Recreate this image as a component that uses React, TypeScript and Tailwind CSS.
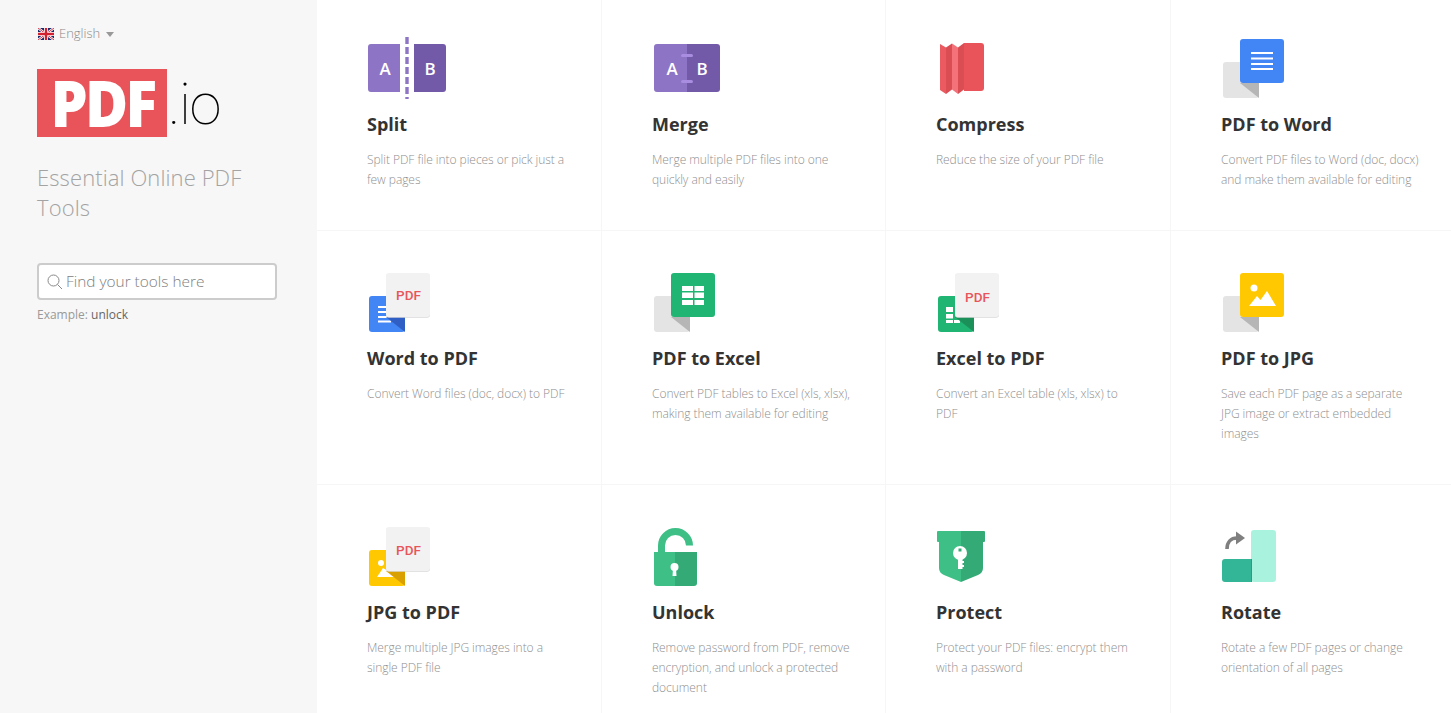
import type { ReactNode } from "react";

const fold = (bg: string, fg: string, shade: string) => (
  <>
    <rect x="2" y="25" width="36" height="36" rx="3" fill={bg} />
    <path d="M19 46H38V61Z" fill={shade} />
    <rect x="19" y="2" width="44" height="44" rx="3" fill={fg} />
  </>
);

const pdfSheet = (y: number) => (
  <>
    <rect x="19" y="2.800" width="44" height="44" rx="3" fill="#d9d9d9" />
    <rect x="19" y="2" width="44" height="44" rx="3" fill="#f2f2f2" />
    <text x="41.500" y={y} textAnchor="middle" fontSize="13.500" fontWeight="500" fill="#e8565c" fontFamily="Roboto, sans-serif">PDF</text>
  </>
);

const letter = (x: number, ch: string) => (
  <text x={x} y="38" textAnchor="middle" fontSize="17" fontWeight="600" fill="#fff" fontFamily="'Open Sans', sans-serif">{ch}</text>
);

const icons: Record<string, ReactNode> = {
  split: (
    <>
      <path d="M4 7H33V55H4A3 3 0 0 1 1 52V10A3 3 0 0 1 4 7Z" fill="#8d74c5" />
      <path d="M47 7H76A3 3 0 0 1 79 10V52A3 3 0 0 1 76 55H47Z" fill="#735aa9" />
      <path d="M40 0V62" stroke="#8d74c5" strokeWidth="3.400" strokeDasharray="7 3" />
      {letter(18, "A")}
      {letter(63, "B")}
    </>
  ),
  merge: (
    <>
      <path d="M5 7H35V55H5A3 3 0 0 1 2 52V10A3 3 0 0 1 5 7Z" fill="#8d74c5" />
      <path d="M35 7H65A3 3 0 0 1 68 10V52A3 3 0 0 1 65 55H35Z" fill="#735aa9" />
      <rect x="29" y="17" width="12" height="3" rx="1.500" fill="#a88de0" />
      <rect x="29" y="43" width="12" height="3" rx="1.500" fill="#a88de0" />
      {letter(20, "A")}
      {letter(50, "B")}
    </>
  ),
  compress: (
    <>
      <path d="M28 6H45A3 3 0 0 1 48 9V51A3 3 0 0 1 45 54H28Z" fill="#e9545b" />
      <path d="M4 7L10 10.500V57L4 53Z" fill="#ea5a60" />
      <path d="M10 10.500L16 6.500V52.500L10 57Z" fill="#d94d53" />
      <path d="M16 6.500L22 10.500V57L16 52.500Z" fill="#f4727a" />
      <path d="M22 10.500L28 6V52.500L22 57Z" fill="#d94d53" />
    </>
  ),
  pdfWord: (
    <>
      {fold("#e4e4e4", "#4285f4", "#b6b6b6")}
      <path d="M30 16H52M30 21.500H52M30 27H52M30 32H52" stroke="#fff" strokeWidth="1.800" />
    </>
  ),
  wordPdf: (
    <>
      <rect x="2" y="25" width="36" height="36" rx="3" fill="#4285f4" />
      <path d="M11 36H19M11 41H19M11 46H24M11 50.500H24" stroke="#fff" strokeWidth="1.800" />
      <path d="M19 46H38V61Z" fill="#2f5fc4" />
      {pdfSheet(29)}
    </>
  ),
  pdfExcel: (
    <>
      {fold("#e4e4e4", "#21b573", "#b6b6b6")}
      <path d="M30 15H41V20H30ZM42.500 15H52V20H42.500ZM30 21.500H41V27H30ZM42.500 21.500H52V27H42.500ZM30 29H41V34H30ZM42.500 29H52V34H42.500Z" fill="#fff" />
    </>
  ),
  excelPdf: (
    <>
      <rect x="2" y="25" width="36" height="36" rx="3" fill="#21b573" />
      <path d="M10 36H17V41H10ZM10 43H17V47.500H10ZM10 49H17V52H10ZM18 49H24V52H18Z" fill="#fff" />
      <path d="M19 46H38V61Z" fill="#1b9159" />
      {pdfSheet(31)}
    </>
  ),
  pdfJpg: (
    <>
      {fold("#e4e4e4", "#ffc800", "#b6b6b6")}
      <circle cx="33" cy="17" r="3.500" fill="#fff" />
      <path d="M28 35L36 25L39.500 29L46 20L55 35Z" fill="#fff" />
    </>
  ),
  jpgPdf: (
    <>
      <rect x="2" y="25" width="36" height="36" rx="3" fill="#ffc800" />
      <circle cx="14" cy="38" r="3" fill="#fff" />
      <path d="M10 52L16 43L21 46L28 52Z" fill="#fff" />
      <path d="M19 46H38V61Z" fill="#d9a000" />
      {pdfSheet(30)}
    </>
  ),
  unlock: (
    <>
      <path d="M9.500 28V20.500A14 14 0 0 1 37.500 20.500" fill="none" stroke="#3dbf85" strokeWidth="7" />
      <path d="M2 27H23V61H5A3 3 0 0 1 2 58Z" fill="#3dbf85" />
      <path d="M23 27H45V58A3 3 0 0 1 42 61H23Z" fill="#34ab76" />
      <circle cx="22.500" cy="42" r="4" fill="#fff" />
      <path d="M21 43H24L24.500 51H20.500Z" fill="#fff" />
    </>
  ),
  protect: (
    <>
      <path d="M2 6H25V57L8 50Q3 48 3 43V17H2A1 1 0 0 1 1 16V7A1 1 0 0 1 2 6Z" fill="#3dbf85" />
      <path d="M25 6H48A1 1 0 0 1 49 7V16A1 1 0 0 1 48 17H47V43Q47 48 42 50L25 57Z" fill="#34ab76" />
      <circle cx="24" cy="28" r="7" fill="#fff" />
      <path d="M22 32H26.500V36H28V38H26.500V40H28V42H26.500V44H22Z" fill="#fff" />
      <rect x="22.500" y="23.500" width="3" height="3" fill="#34ab76" />
    </>
  ),
  rotate: (
    <>
      <path d="M4 34H31V57H4A3 3 0 0 1 1 54V37A3 3 0 0 1 4 34Z" fill="#33b697" />
      <rect x="30" y="5" width="25" height="52" rx="3" fill="#a9f3de" />
      <path d="M30 34H31V57H30Z" fill="#2a9c80" />
      <path d="M6 24C6 17 10 13 16 13" fill="none" stroke="#7f7f7f" strokeWidth="3.600" />
      <path d="M15 6.500L24 13L15 19.500Z" fill="#7f7f7f" />
    </>
  ),
};

const rows = [
  [
    { icon: "split", title: "Split", desc: "Split PDF file into pieces or pick just a few pages" },
    { icon: "merge", title: "Merge", desc: "Merge multiple PDF files into one quickly and easily" },
    { icon: "compress", title: "Compress", desc: "Reduce the size of your PDF file" },
    { icon: "pdfWord", title: "PDF to Word", desc: "Convert PDF files to Word (doc, docx) and make them available for editing" },
  ],
  [
    { icon: "wordPdf", title: "Word to PDF", desc: "Convert Word files (doc, docx) to PDF" },
    { icon: "pdfExcel", title: "PDF to Excel", desc: "Convert PDF tables to Excel (xls, xlsx), making them available for editing" },
    { icon: "excelPdf", title: "Excel to PDF", desc: "Convert an Excel table (xls, xlsx) to PDF" },
    { icon: "pdfJpg", title: "PDF to JPG", desc: "Save each PDF page as a separate JPG image or extract embedded images" },
  ],
  [
    { icon: "jpgPdf", title: "JPG to PDF", desc: "Merge multiple JPG images into a single PDF file" },
    { icon: "unlock", title: "Unlock", desc: "Remove password from PDF, remove encryption, and unlock a protected document" },
    { icon: "protect", title: "Protect", desc: "Protect your PDF files: encrypt them with a password" },
    { icon: "rotate", title: "Rotate", desc: "Rotate a few PDF pages or change orientation of all pages" },
  ],
];

function Flag() {
  return (
    <svg width="16" height="12" viewBox="0 0 16 12">
      <rect width="16" height="12" fill="#1b2a6b" />
      <path d="M0 0L16 12M16 0L0 12" stroke="#fff" strokeWidth="2.400" />
      <path d="M0 0L16 12M16 0L0 12" stroke="#d22030" strokeWidth="0.900" />
      <path d="M8 0V12M0 6H16" stroke="#fff" strokeWidth="4" />
      <path d="M8 0V12M0 6H16" stroke="#d22030" strokeWidth="2.400" />
    </svg>
  );
}

function Sidebar() {
  return (
    <aside className="w-[317px] shrink-0 bg-[#f7f7f7] pl-[37px] pr-10">
      <div className="flex h-[69px] items-start pt-[25px]">
        <div className="flex h-[18px] items-center text-[13px] font-light text-[#8a8a8a]">
          <span className="ml-px"><Flag /></span>
          <span className="ml-[5px]">English</span>
          <span className="ml-[6px] h-0 w-0 border-x-[4px] border-t-[5px] border-x-transparent border-t-[#999]"></span>
        </div>
      </div>
      <div className="flex items-start">
        <div className="flex h-[68px] w-[130px] items-center justify-center bg-[#e9545b] text-[64px] font-extrabold leading-none tracking-[-3px] text-white">
          <span className="block scale-x-[0.92]">PDF</span>
        </div>
        <div className="ml-[1px] font-['Roboto',sans-serif] text-[58px] font-thin leading-[70px] tracking-[-1.500px] text-black">.io</div>
      </div>
      <h2 className="mt-[23px] text-[22px] font-light leading-[30px] tracking-[0.1px] text-[#a3a3a3]">Essential Online PDF Tools</h2>
      <div className="mt-[41px] flex h-[37px] w-[240px] items-center rounded-[4px] border-2 border-[#cccccc] bg-white pl-2">
        <svg width="16" height="16" viewBox="0 0 16 16" fill="none" stroke="#8a8a8a" strokeWidth="1">
          <circle cx="6.500" cy="6.500" r="5.500" />
          <path d="M10.500 10.500L15 15" />
        </svg>
        <input
          placeholder="Find your tools here"
          className="ml-[3px] w-[200px] bg-transparent text-[15.400px] font-light text-[#777] outline-none placeholder:text-[#808080]"
        />
      </div>
      <p className="mt-[7px] text-[12px] leading-[16px] text-[#999]">
        Example: <span className="text-[#666]">unlock</span>
      </p>
    </aside>
  );
}

function Card({ icon, title, desc, col, first }: { icon: string; title: string; desc: string; col: number; first: boolean }) {
  return (
    <div className={`border-b border-[#f6f6f6] pb-10 pl-[50px] ${first ? "pt-[37px]" : "pt-[40px]"} ${col < 3 ? "border-r" : ""}`}>
      <svg width="100" height="64" viewBox="0 0 100 64" className="block">
        {icons[icon]}
      </svg>
      <h3 className="mt-[11px] text-[18px] font-bold leading-[24px] text-[#333]">{title}</h3>
      <p className="mt-[14px] w-[202px] text-[12px] font-light leading-[20px] tracking-[-0.05px] text-[#8f8f8f]">{desc}</p>
    </div>
  );
}

export default function App() {
  return (
    <div className="flex h-screen overflow-hidden bg-white font-['Open_Sans',sans-serif]">
      <Sidebar />
      <main className="grid flex-1 grid-cols-[285px_284px_285px_1fr] content-start">
        {rows.map((row, r) =>
          row.map((tool, c) => <Card key={tool.title} {...tool} col={c} first={r === 0} />)
        )}
      </main>
    </div>
  );
}
